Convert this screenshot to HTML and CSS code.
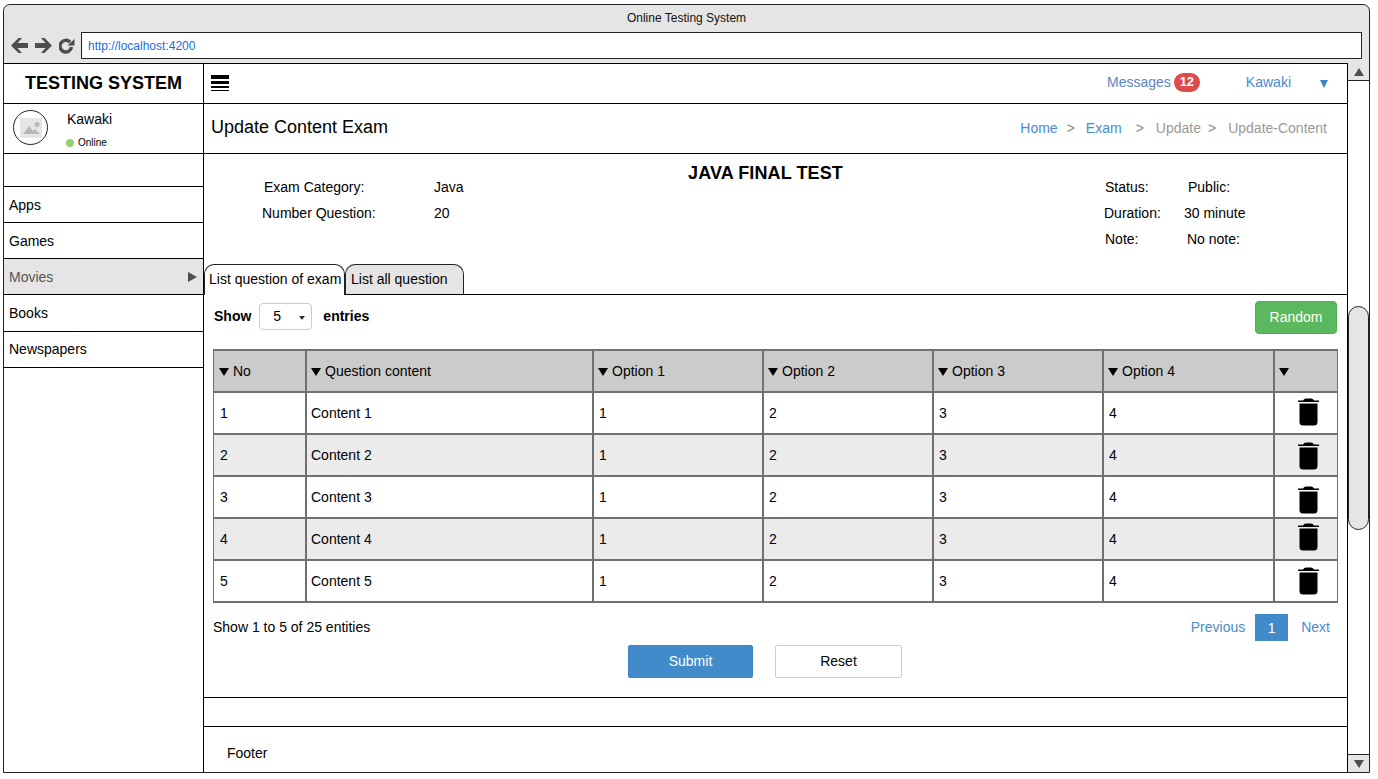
FILE: index.html
```html
<!DOCTYPE html>
<html lang="en">

<head>
   <meta charset="UTF-8">
   <title>Online Testing System</title>
   <link rel="stylesheet" href="styles.css">
</head>

<body>
   <div class="ventana">
      <div class="titulo">Online Testing System</div>
      <div class="navegador">
         <svg class="nav-icono" width="17" height="15" viewBox="0 0 17 15"><path d="M0 7.500L7.500 0H11L6.500 5H17V10H6.500L11 15H7.500Z" fill="#4d4d4d"/></svg>
         <svg class="nav-icono" width="17" height="15" viewBox="0 0 17 15"><path d="M17 7.500L9.500 0H6L10.500 5H0V10H10.500L6 15H9.500Z" fill="#4d4d4d"/></svg>
         <svg class="nav-icono recarga" width="17" height="16" viewBox="0 0 17 16"><path d="M11 4.200A5.800 5.800 0 1 0 12.500 9" fill="none" stroke="#4d4d4d" stroke-width="3.500"/><path d="M8.500 7.500H15.500V1Z" fill="#4d4d4d"/></svg>
         <div class="url">http://localhost:4200</div>
      </div>

      <div class="cuerpo">
         <!-- Menu lateral -->
         <aside class="lateral">
            <div class="marca">TESTING SYSTEM</div>
            <div class="usuario">
               <div class="avatar">
                  <svg width="22" height="20" viewBox="0 0 22 20"><rect width="22" height="20" fill="#e6e6e6"/><path d="M3 16L9 8L13 13L15 11L20 16Z" fill="#b8b8b8"/><circle cx="17" cy="6.500" r="2.500" fill="#b8b8b8"/></svg>
               </div>
               <div class="usuario-datos">
                  <div class="usuario-nombre">Kawaki</div>
                  <div class="usuario-estado"><span class="punto"></span>Online</div>
               </div>
            </div>
            <div class="lateral-hueco"></div>
            <div class="item">Apps</div>
            <div class="item">Games</div>
            <div class="item activo">Movies<span class="flecha"></span></div>
            <div class="item">Books</div>
            <div class="item">Newspapers</div>
         </aside>

         <main class="contenido">
            <div class="barra">
               <div class="hamburguesa"><i></i><i></i><i></i><i></i></div>
               <div class="barra-der">
                  <a class="enlace">Messages</a>
                  <span class="insignia">12</span>
                  <a class="enlace barra-user">Kawaki</a>
                  <span class="triangulo"></span>
               </div>
            </div>

            <div class="cabecera">
               <h1>Update Content Exam</h1>
               <div class="migas">
                  <a class="enlace">Home</a><span class="sep sep-1">&gt;</span>
                  <a class="enlace">Exam</a><span class="sep sep-2">&gt;</span>
                  <span class="gris">Update</span><span class="sep sep-3">&gt;</span>
                  <span class="gris">Update-Content</span>
               </div>
            </div>

            <div class="info">
               <div class="info-izq">
                  <span class="k-1">Exam Category:</span><span>Java</span>
                  <span>Number Question:</span><span>20</span>
               </div>
               <h2>JAVA FINAL TEST</h2>
               <div class="info-dcha">
                  <span class="k-3">Status:</span><span class="v-2">Public:</span>
                  <span>Duration:</span><span>30 minute</span>
                  <span class="k-3">Note:</span><span class="v-1">No note:</span>
               </div>
            </div>

            <div class="pestanas">
               <div class="pestana activa">List question of exam</div>
               <div class="pestana">List all question</div>
            </div>

            <div class="panel">
               <div class="controles">
                  <b>Show</b>
                  <div class="selector">5<span class="selector-flecha"></span></div>
                  <b>entries</b>
                  <div class="boton-random">Random</div>
               </div>

               <div class="tabla">
                  <div class="fila cab">
                     <div><span class="orden"></span>No</div>
                     <div><span class="orden"></span>Question content</div>
                     <div><span class="orden"></span>Option 1</div>
                     <div><span class="orden"></span>Option 2</div>
                     <div><span class="orden"></span>Option 3</div>
                     <div><span class="orden"></span>Option 4</div>
                     <div><span class="orden"></span></div>
                  </div>
                  <div class="fila">
                     <div>1</div><div>Content 1</div><div>1</div><div>2</div><div>3</div><div>4</div>
                     <div class="borrar"><svg width="21" height="28" viewBox="0 0 21 28"><use href="#papelera"/></svg></div>
                  </div>
                  <div class="fila par">
                     <div>2</div><div>Content 2</div><div>1</div><div>2</div><div>3</div><div>4</div>
                     <div class="borrar"><svg width="21" height="28" viewBox="0 0 21 28"><use href="#papelera"/></svg></div>
                  </div>
                  <div class="fila">
                     <div>3</div><div>Content 3</div><div>1</div><div>2</div><div>3</div><div>4</div>
                     <div class="borrar"><svg width="21" height="28" viewBox="0 0 21 28"><use href="#papelera"/></svg></div>
                  </div>
                  <div class="fila par">
                     <div>4</div><div>Content 4</div><div>1</div><div>2</div><div>3</div><div>4</div>
                     <div class="borrar"><svg width="21" height="28" viewBox="0 0 21 28"><use href="#papelera"/></svg></div>
                  </div>
                  <div class="fila">
                     <div>5</div><div>Content 5</div><div>1</div><div>2</div><div>3</div><div>4</div>
                     <div class="borrar"><svg width="21" height="28" viewBox="0 0 21 28"><use href="#papelera"/></svg></div>
                  </div>
               </div>

               <div class="pie-tabla">
                  <span>Show 1 to 5 of 25 entities</span>
                  <div class="paginas">
                     <a class="enlace">Previous</a>
                     <span class="pagina">1</span>
                     <a class="enlace">Next</a>
                  </div>
               </div>

               <div class="acciones">
                  <div class="boton-submit">Submit</div>
                  <div class="boton-reset">Reset</div>
               </div>
            </div>

            <div class="hueco"></div>
            <footer class="pie">Footer</footer>
         </main>

         <!-- Barra de desplazamiento -->
         <div class="scroll">
            <div class="scroll-boton"><span class="scroll-arriba"></span></div>
            <div class="scroll-pista"><div class="scroll-pulgar"></div></div>
            <div class="scroll-boton abajo"><span class="scroll-abajo"></span></div>
         </div>
      </div>
   </div>

   <svg width="0" height="0" class="defs">
      <symbol id="papelera" viewBox="0 0 21 28">
         <path d="M0 4V2.600H5Q6 .5 8 .5H13Q15 .5 16 2.600H21V4Z" fill="#000"/>
         <path d="M1.500 5.500H19.500V24Q19.500 27.500 16 27.500H5Q1.500 27.500 1.500 24Z" fill="#000"/>
      </symbol>
   </svg>
</body>

</html>
```

FILE: styles.css
```css
* {
   box-sizing: border-box;
}

html,
body {
   margin: 0;
   height: 100%;
   background: #fff;
   overflow: hidden;
}

body {
   font-family: "Liberation Sans", Arial, sans-serif;
   font-size: 14px;
   color: #000;
}

.defs {
   position: absolute;
}

/* Marco de la ventana */
.ventana {
   margin: 4px 0 0 3px;
   width: 1367px;
   height: 769px;
   border: 1px solid #222;
   border-radius: 7px 7px 0 0;
   background: #e5e5e5;
   display: flex;
   flex-direction: column;
   overflow: hidden;
}

.titulo {
   height: 25px;
   padding-top: 6px;
   text-align: center;
   font-size: 12px;
   color: #111;
}

.navegador {
   height: 33px;
   display: flex;
   align-items: flex-start;
   padding: 2px 7px 0 7px;
}

.nav-icono {
   margin-top: 6px;
   margin-right: 7px;
}

.nav-icono.recarga {
   margin-right: 5px;
}

.url {
   flex: 1;
   height: 27px;
   background: #fff;
   border: 1px solid #222;
   padding: 6px 6px;
   font-size: 12px;
   color: #1a6fd8;
}

.cuerpo {
   flex: 1;
   display: flex;
   background: #fff;
   min-height: 0;
}

/* Menu lateral */
.lateral {
   width: 199px;
   flex: none;
   border-top: 1px solid #000;
}

.marca {
   height: 40px;
   border-bottom: 1px solid #000;
   text-align: center;
   font-weight: bold;
   font-size: 18px;
   line-height: 38px;
}

.usuario {
   height: 50px;
   border-bottom: 1px solid #000;
   display: flex;
}

.avatar {
   width: 35px;
   height: 35px;
   margin: 6px 0 0 9px;
   border: 1px solid #222;
   border-radius: 50%;
   display: flex;
   align-items: center;
   justify-content: center;
}

.usuario-datos {
   margin-left: 18px;
}

.usuario-nombre {
   margin-top: 7px;
   margin-left: 1px;
}

.usuario-estado {
   margin-top: 10px;
   font-size: 10px;
   display: flex;
   align-items: center;
}

.punto {
   width: 8px;
   height: 8px;
   border-radius: 50%;
   background: #8fd16f;
   margin-right: 4px;
}

.lateral-hueco {
   height: 33px;
   border-bottom: 1px solid #000;
}

.item {
   height: 36px;
   border-bottom: 1px solid #000;
   padding-left: 5px;
   line-height: 36px;
   position: relative;
}

.item:nth-of-type(n+7) {
   height: 36.500px;
}

.item:last-child {
   line-height: 35px;
}

.activo {
   background: #e5e5e5;
   color: #555;
}

.flecha {
   position: absolute;
   right: 6px;
   top: 13px;
   border-left: 9px solid #4d4d4d;
   border-top: 5px solid transparent;
   border-bottom: 5px solid transparent;
}

/* Contenido */
.contenido {
   width: 1145px;
   flex: none;
   border-left: 1px solid #000;
   border-right: 1px solid #000;
   border-top: 1px solid #000;
   display: flex;
   flex-direction: column;
}

.barra {
   height: 40px;
   flex: none;
   border-bottom: 1px solid #000;
   display: flex;
   align-items: center;
   justify-content: space-between;
   padding: 0 19px 0 7px;
}

.hamburguesa {
   width: 18px;
   margin-top: -2px;
   display: flex;
   flex-direction: column;
   gap: 2px;
}

.hamburguesa i {
   display: block;
   height: 4px;
   background: #000;
}

.hamburguesa i:nth-child(2) {
   height: 3px;
}

.hamburguesa i:nth-child(3) {
   height: 2px;
}

.hamburguesa i:nth-child(4) {
   height: 1px;
}

.barra-der {
   display: flex;
   align-items: center;
   margin-top: -3px;
}

.enlace {
   color: #4a8ccc;
}

.barra-der .enlace:first-child {
   color: #5c84c4;
}

.insignia {
   margin-left: 3px;
   width: 26px;
   height: 19px;
   border-radius: 10px;
   background: #dd4b4b;
   color: #fff;
   font-weight: bold;
   font-size: 13px;
   text-align: center;
   line-height: 18px;
}

.barra-user {
   margin-left: 46px;
}

.triangulo {
   margin-left: 29px;
   margin-top: 3px;
   border-top: 8px solid #3d85c6;
   border-left: 4.500px solid transparent;
   border-right: 4.500px solid transparent;
}

.cabecera {
   height: 50px;
   flex: none;
   border-bottom: 1px solid #000;
   display: flex;
   align-items: center;
   justify-content: space-between;
   padding: 0 20px 2px 7px;
}

.cabecera h1 {
   margin: 0;
   font-size: 18px;
   font-weight: normal;
}

.migas {
   display: flex;
   align-items: center;
}

.gris {
   color: #999;
}

.sep {
   color: #888;
}

.sep-1 {
   margin: 0 11px 0 9px;
}

.sep-2 {
   margin: 0 12px 0 14px;
}

.sep-3 {
   margin: 0 12px 0 7px;
}

.info {
   height: 110px;
   flex: none;
   position: relative;
   display: flex;
   justify-content: space-between;
   padding: 25px 0 0 58px;
}

.info h2 {
   position: absolute;
   left: 0;
   width: 1123px;
   top: 9px;
   margin: 0;
   text-align: center;
   font-size: 18px;
   line-height: 20px;
   letter-spacing: .1px;
}

.info-izq {
   display: grid;
   grid-template-columns: 113px auto;
   column-gap: 59px;
   grid-auto-rows: 26px;
   align-content: start;
   white-space: nowrap;
}

.k-1 {
   margin-left: 2px;
}

.info-dcha {
   display: grid;
   grid-template-columns: 80px 110px;
   grid-auto-rows: 26px;
   align-content: start;
   margin-right: 53px;
}

.v-1 {
   margin-left: 3px;
}

.v-2 {
   margin-left: 4px;
}

.k-3 {
   margin-left: 1px;
}

/* Pestanas */
.pestanas {
   height: 31px;
   flex: none;
   display: flex;
   border-bottom: 1px solid #000;
}

.pestana {
   height: 30px;
   border: 1px solid #222;
   border-bottom: none;
   border-radius: 10px 10px 0 0;
   background: #e5e5e5;
   padding: 6px 0 0 5px;
   width: 119px;
}

.pestana.activa {
   width: 141px;
   background: #fff;
   height: 31px;
   margin-bottom: -1px;
   padding-left: 4px;
   position: relative;
}

/* Panel de la tabla */
.panel {
   height: 403px;
   flex: none;
   border-bottom: 1px solid #000;
   padding: 6px 10px 0 9px;
}

.controles {
   height: 33px;
   display: flex;
   align-items: center;
   margin-left: 1px;
   padding-bottom: 3px;
}

.selector {
   margin: 0 11px 0 8px;
   width: 53px;
   height: 27px;
   border: 1px solid #ccc;
   border-radius: 4px;
   padding: 4px 0 0 13px;
   position: relative;
}

.selector-flecha {
   position: absolute;
   right: 6px;
   top: 12px;
   border-top: 4px solid #333;
   border-left: 3px solid transparent;
   border-right: 3px solid transparent;
}

.boton-random {
   margin-left: auto;
   margin-top: 3px;
   width: 82px;
   height: 33px;
   background: #5cb85c;
   border: 1px solid #4cae4c;
   border-radius: 4px;
   color: #fff;
   text-align: center;
   line-height: 31px;
}

.tabla {
   margin-top: 15px;
   width: 1125px;
   border-top: 2px solid #707070;
   border-left: 1px solid #707070;
   border-right: 1px solid #707070;
}

.fila {
   display: grid;
   grid-template-columns: 92px 287px 170px 170px 170px 171px 1fr;
   height: 42px;
   border-bottom: 2px solid #707070;
   line-height: 40px;
}

.fila > div {
   padding-left: 5px;
   border-left: 2px solid #707070;
   margin-left: -1px;
}

.fila > div:first-child {
   border-left: none;
   margin-left: 0;
   padding-left: 6px;
}

.cab {
   background: #cbcbcb;
}

.cab > div {
   padding-left: 4px;
}

.fila.cab > div:first-child {
   padding-left: 5px;
}

.fila > div:nth-child(2) {
   padding-left: 4px;
}

.par {
   background: #ebebeb;
}

.orden {
   display: inline-block;
   margin-right: 4px;
   border-top: 8px solid #000;
   border-left: 5px solid transparent;
   border-right: 5px solid transparent;
}

/* La papelera no queda igual en cada fila */
.fila > .borrar {
   display: flex;
   justify-content: center;
   align-items: flex-start;
   padding-left: 4px;
   padding-top: 5px;
}

.fila:nth-child(3) > .borrar {
   padding-top: 7px;
}

.fila:nth-child(4) > .borrar {
   padding-top: 9px;
}

.fila:nth-child(5) > .borrar {
   padding-top: 4px;
}

.fila:nth-child(6) > .borrar {
   padding-top: 6px;
}

.pie-tabla {
   display: flex;
   justify-content: space-between;
   margin-top: 11px;
   height: 31px;
}

.pie-tabla > span {
   margin-top: 5px;
}

.paginas {
   display: flex;
   align-items: flex-start;
   margin-right: 7px;
}

.paginas .enlace {
   margin-top: 5px;
}

.pagina {
   margin: 0 13px 0 10px;
   width: 33px;
   height: 27px;
   background: #428bca;
   color: #fff;
   text-align: center;
   line-height: 29px;
}

.acciones {
   display: flex;
   margin-left: 415px;
   gap: 22px;
}

.boton-submit,
.boton-reset {
   height: 33px;
   text-align: center;
   line-height: 31px;
   border-radius: 2px;
}

.boton-submit {
   width: 125px;
   background: #428bca;
   border: 1px solid #3d85c6;
   color: #fff;
}

.boton-reset {
   width: 127px;
   background: #fff;
   border: 1px solid #ccc;
}

.hueco {
   height: 29px;
   flex: none;
   border-bottom: 1px solid #000;
}

.pie {
   flex: 1;
   padding: 18px 0 0 23px;
}

/* Barra de desplazamiento */
.scroll {
   flex: 1;
   display: flex;
   flex-direction: column;
   background: #fff;
}

.scroll-boton {
   height: 18px;
   flex: none;
   background: #e5e5e5;
   border-bottom: 1px solid #222;
   display: flex;
   align-items: center;
   justify-content: center;
}

.scroll-boton.abajo {
   border-bottom: none;
   border-top: 1px solid #222;
}

.scroll-arriba {
   border-bottom: 8px solid #4d4d4d;
   border-left: 5.500px solid transparent;
   border-right: 5.500px solid transparent;
}

.scroll-abajo {
   border-top: 8px solid #4d4d4d;
   border-left: 5.500px solid transparent;
   border-right: 5.500px solid transparent;
}

.scroll-pista {
   flex: 1;
   padding-top: 225px;
}

.scroll-pulgar {
   height: 224px;
   background: #e5e5e5;
   border: 1px solid #222;
   border-radius: 11px;
}
```
